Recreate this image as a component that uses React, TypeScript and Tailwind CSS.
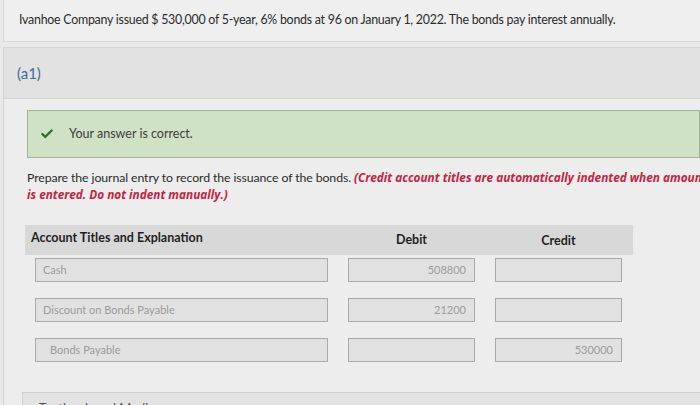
import { Check } from "lucide-react";

const rows = [
  { account: "Cash", indent: false, debit: "508800", credit: "" },
  { account: "Discount on Bonds Payable", indent: false, debit: "21200", credit: "" },
  { account: "Bonds Payable", indent: true, debit: "", credit: "530000" },
];

function Field({ value, align = "left", indent = false, width }: { value: string; align?: "left" | "right"; indent?: boolean; width: string }) {
  return (
    <div
      className={`${width} h-[24px] flex items-center bg-[#e1e1e1] border border-[#a9a9a9] text-[11px] text-[#9b9b9b] ${
        align === "right" ? "justify-end pr-[8px]" : indent ? "pl-[14px]" : "pl-[7px]"
      }`}
    >
      {value}
    </div>
  );
}

export default function App() {
  return (
    <div className="w-[700px] h-[405px] overflow-hidden bg-[#e9e9e9] font-['Lato','Open_Sans',sans-serif] text-[#2b2b2b]">
      {/* Problem statement */}
      <div className="ml-[3px] h-[42px] flex items-center pl-[15px] bg-[#efefef] border-b border-l border-[#d6d6d6] text-[12.4px] tracking-[-0.25px]">
        Ivanhoe Company issued $ 530,000 of 5-year, 6% bonds at 96 on January 1, 2022. The bonds pay interest annually.
      </div>

      {/* Part a1 */}
      <div className="mt-[5px] ml-[3px] border-l border-t border-[#d3d3d3]">
        <div className="h-[51px] flex items-center pl-[13px] bg-[#e2e2e2] border-b border-[#d3d3d3] text-[15px] text-[#3f6c96]">
          (a1)
        </div>

        <div className="bg-[#ededed] pt-[11px] pl-[23px] h-[306px]">
          <div className="h-[48px] flex items-center gap-[15px] pl-[12px] bg-[#cfe2c5] border border-[#9fb495] text-[12.5px] text-[#3d3d3d]">
            <Check className="w-[14px] h-[14px] text-[#2f6f34]" strokeWidth={4} />
            <span>Your answer is correct.</span>
          </div>

          <p className="mt-[11px] text-[12.3px] leading-[17px] whitespace-nowrap tracking-[-0.1px]">
            Prepare the journal entry to record the issuance of the bonds.{" "}
            <span className="text-[#c3243f] font-['Open_Sans',sans-serif] font-bold italic text-[11.8px] tracking-[0px]">
              (Credit account titles are automatically indented when amount
            </span>
            <br />
            <span className="text-[#c3243f] font-['Open_Sans',sans-serif] font-bold italic text-[11.8px] tracking-[0px]">
              is entered. Do not indent manually.)
            </span>
          </p>

          {/* Table */}
          <div className="mt-[22px] w-[608px] -ml-[2px]">
            <div className="h-[30px] flex items-center bg-[#d8d8d8] text-[12.5px] font-bold text-[#1f1f1f]">
              <div className="w-[323px] pl-[6px] -mt-[4px]">Account Titles and Explanation</div>
              <div className="w-[127px] text-center">Debit</div>
              <div className="w-[127px] ml-[20px] text-center mt-[2px]">Credit</div>
            </div>
            <div className="flex flex-col gap-[16px] pt-[3px] pl-[10px]">
              {rows.map((r) => (
                <div key={r.account} className="flex gap-[20px]">
                  <Field value={r.account} indent={r.indent} width="w-[293px]" />
                  <Field value={r.debit} align="right" width="w-[127px]" />
                  <Field value={r.credit} align="right" width="w-[127px]" />
                </div>
              ))}
            </div>
          </div>

          <div className="mt-[30px] -ml-[5px] h-[20px] bg-[#e3e3e3] border-t border-l border-[#d0d0d0] pl-[16px] pt-[6px] text-[13px] text-[#555] overflow-hidden">
            Textbook and Media
          </div>
        </div>
      </div>
    </div>
  );
}
